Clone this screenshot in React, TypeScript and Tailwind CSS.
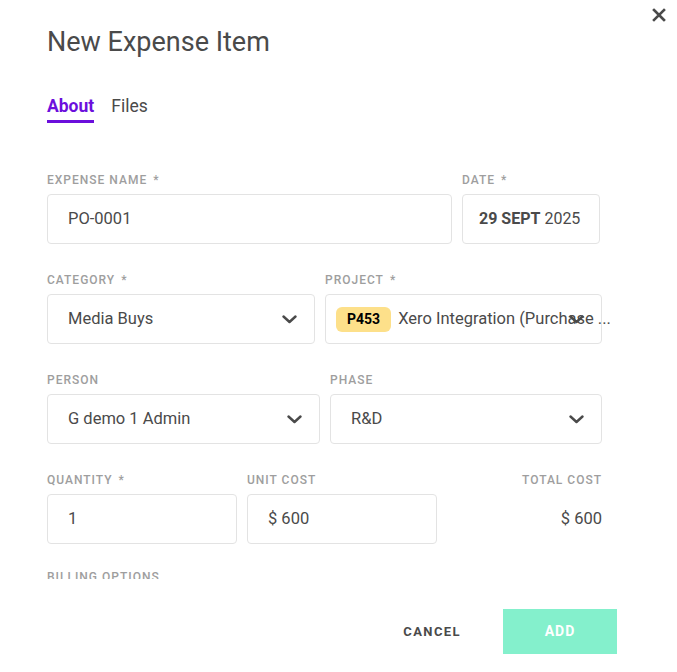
import React from "react";

const font = { fontFamily: "Roboto, 'Liberation Sans', sans-serif" };

const Chevron = () => (
  <svg width="15" height="9" viewBox="0 0 15 9" className="shrink-0">
    <path d="M1.5 1.5 L7.5 7 L13.5 1.5" fill="none" stroke="#4a4a4a" strokeWidth="2.4" strokeLinecap="round" strokeLinejoin="round" />
  </svg>
);

const Label = ({ text, required }: { text: string; required?: boolean }) => (
  <div className="h-[14px] mb-[7px] text-[12px] leading-[14px] font-medium tracking-[1px] text-[#9e9e9e] uppercase whitespace-nowrap">
    {text}
    {required && <span className="ml-[6px]">*</span>}
  </div>
);

const boxCls =
  "h-[50px] border border-[#e3e3e3] rounded-[4px] flex items-center text-[16.5px] text-[#4a4a4a] bg-white";

export default function App() {
  return (
    <div className="relative w-[677px] h-[672px] bg-white overflow-hidden flex flex-col" style={font}>
      <button className="absolute right-[10px] top-[7px] w-[16px] h-[16px] flex items-center justify-center">
        <svg width="14" height="14" viewBox="0 0 14 14">
          <path d="M2 2 L12 12 M12 2 L2 12" stroke="#4a4a4a" strokeWidth="2.6" strokeLinecap="square" />
        </svg>
      </button>

      <div className="pl-[47px] pt-[26px]">
        <h1 className="text-[27px] leading-[32px] text-[#4a4a4a] font-normal">New Expense Item</h1>
        <div className="flex gap-[17px] mt-[37px]">
          <div className="flex flex-col">
            <span className="text-[17.5px] leading-[22px] font-bold text-[#6b0fdc]">About</span>
            <span className="mt-[3px] h-[3px] bg-[#6b0fdc]"></span>
          </div>
          <span className="text-[17.5px] leading-[22px] text-[#4a4a4a]">Files</span>
        </div>
      </div>

      <div className="h-[456px] overflow-hidden pl-[47px] pr-[75px] pt-[50px] flex flex-col gap-[29px]">
        <div className="flex gap-[10px]">
          <div className="w-[405px]">
            <Label text="Expense Name" required />
            <div className={`${boxCls} px-[20px]`}>PO-0001</div>
          </div>
          <div className="w-[138px]">
            <Label text="Date" required />
            <div className={`${boxCls} px-[16px] whitespace-nowrap text-[16px]`}>
              <b className="font-bold">29 SEPT</b>&nbsp;2025
            </div>
          </div>
        </div>

        <div className="flex gap-[10px]">
          <div className="w-[268px]">
            <Label text="Category" required />
            <div className={`${boxCls} pl-[20px] pr-[17px] justify-between`}>
              <span>Media Buys</span>
              <Chevron />
            </div>
          </div>
          <div className="flex-1 min-w-0">
            <Label text="Project" required />
            <div className={`${boxCls} relative pl-[10px] pr-[17px]`}>
              <span className="shrink-0 h-[25px] px-[11px] rounded-[6px] bg-[#fde08a] text-[14px] font-bold text-black flex items-center">
                P453
              </span>
              <span className="ml-[7px] whitespace-nowrap">Xero Integration (Purchase ...</span>
              <span className="absolute right-[17px] top-[20px]">
                <Chevron />
              </span>
            </div>
          </div>
        </div>

        <div className="flex gap-[10px]">
          <div className="w-[273px]">
            <Label text="Person" />
            <div className={`${boxCls} pl-[20px] pr-[17px] justify-between`}>
              <span>G demo 1 Admin</span>
              <Chevron />
            </div>
          </div>
          <div className="flex-1">
            <Label text="Phase" />
            <div className={`${boxCls} pl-[20px] pr-[17px] justify-between`}>
              <span>R&amp;D</span>
              <Chevron />
            </div>
          </div>
        </div>

        <div className="flex gap-[10px]">
          <div className="w-[190px]">
            <Label text="Quantity" required />
            <div className={`${boxCls} px-[20px]`}>1</div>
          </div>
          <div className="w-[190px]">
            <Label text="Unit Cost" />
            <div className={`${boxCls} px-[20px]`}>$ 600</div>
          </div>
          <div className="flex-1 flex flex-col items-end">
            <Label text="Total Cost" />
            <div className="h-[50px] flex items-center text-[16.5px] text-[#4a4a4a]">$ 600</div>
          </div>
        </div>

        <div className="-mt-[3px]">
          <Label text="Billing Options" />
        </div>
      </div>

      <div className="flex justify-end items-center gap-[42px] pr-[60px] pt-[30px]">
        <button className="text-[13px] font-bold tracking-[1.4px] text-[#4a4a4a]">CANCEL</button>
        <button className="w-[114px] h-[45px] bg-[#84f0cc] text-white text-[14px] font-bold tracking-[1px]">ADD</button>
      </div>
    </div>
  );
}
